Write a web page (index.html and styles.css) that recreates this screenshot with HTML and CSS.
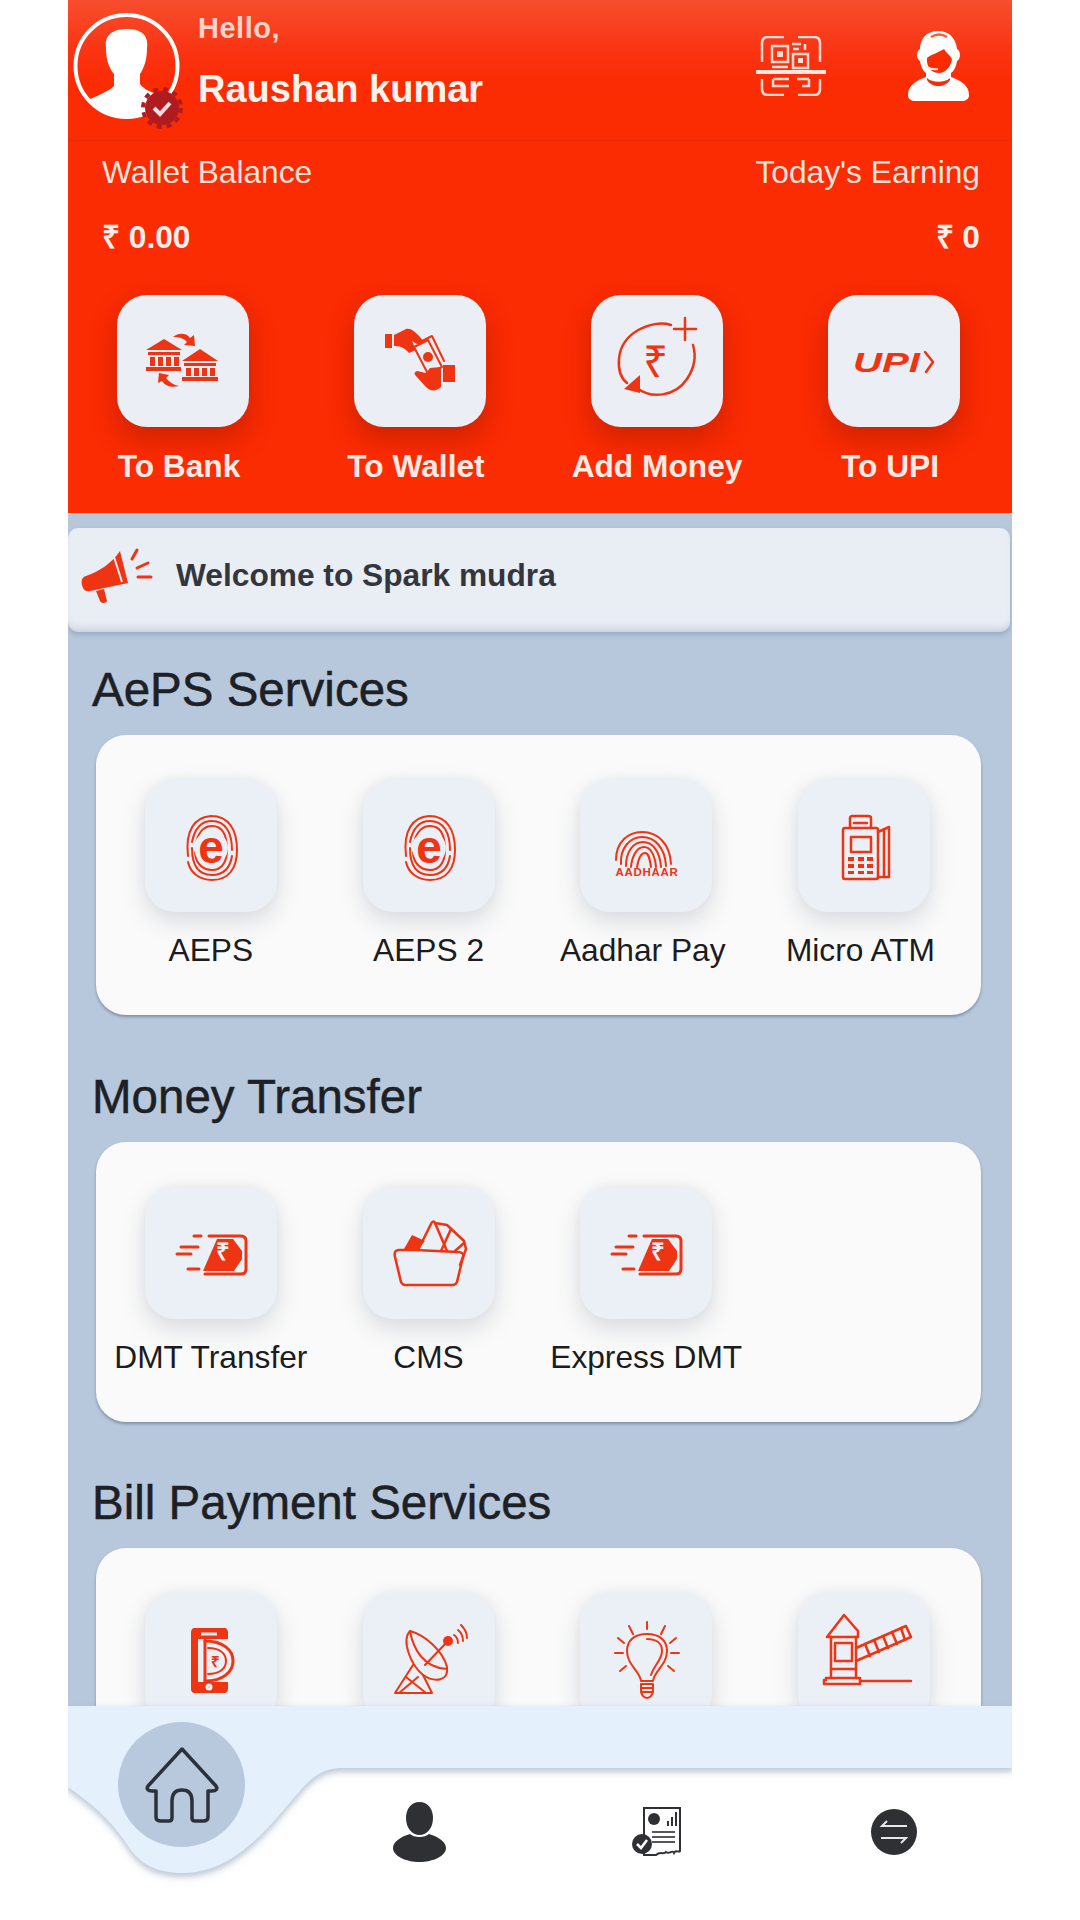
FILE: index.html
```html
<!DOCTYPE html>
<html lang="en">
<head>
<meta charset="utf-8">
<title>Spark mudra</title>
<link rel="stylesheet" href="styles.css">
</head>
<body>
<svg class="defs" width="0" height="0" aria-hidden="true">
  <defs>
    <clipPath id="avatar-clip"><circle cx="58.5" cy="66" r="50"/></clipPath>
    <symbol id="fingerprint" viewBox="0 0 132 132">
      <g class="ln ln-2" >
        <path d="M43 76C40 50 50 37 66 36C84 36 92 50 92 70C92 88 84 100 67 100C54 100 45 92 43 82"/>
        <path d="M47 62C50 47 58 41 67 41C80 41 87 52 87 70"/>
        <path d="M47 68C47 86 54 95 67 95C78 95 85 88 87 76"/>
        <path d="M51 64C53 51 60 46 67 46C77 46 82 55 82 70C82 83 76 90 67 90C57 90 50 82 50 72"/>
      </g>
      <circle class="tile-fill" cx="66" cy="68" r="17"/>
      <text class="fp-e" x="66" y="83" text-anchor="middle">e</text>
    </symbol>
    <symbol id="dmt" viewBox="0 0 132 132">
      <g class="ln ln-3">
        <path d="M49 49H56M36 60H53M43 82H54M32 67H46"/>
        <path d="M64 49H96C100 49 101 51 101 54V82C101 85 100 87 96 87H60"/>
      </g>
      <path class="fill" d="M72 52H88L97 64V72L89 84H58Z"/>
      <text class="dmt-r" x="78" y="73" text-anchor="middle">₹</text>
    </symbol>
  </defs>
</svg>

<div class="app">
  <header class="header">
    <div class="top-row">
      <svg class="avatar" viewBox="0 0 130 132" width="130" height="132">
        <circle class="avatar-ring" cx="58.5" cy="66" r="51"/>
        <path class="avatar-bust" clip-path="url(#avatar-clip)" d="M38 48C36 34 46 29 59 29C72 29 81 34 79 48C79 60 76 68 72 74L72 84C76 90 84 92 92 96V125H16V102C28 96 40 92 46 86V74C41 68 38 60 38 48Z"/>
        <circle class="badge" cx="94" cy="108" r="17"/>
        <circle class="badge-edge" cx="94" cy="108" r="19"/>
        <path class="badge-check" d="M86 108L92 114L102 103"/>
      </svg>
      <div class="greeting">
        <div class="hello">Hello,</div>
        <div class="name">Raushan kumar</div>
      </div>
      <div class="top-icons">
        <svg class="qr" viewBox="0 0 72 60" width="72" height="60">
          <g class="qr-ln">
            <path d="M7 26V7C7 3 9 1 13 1H29M43 1H59C63 1 65 3 65 7V26"/>
            <path d="M7 43V53C7 57 9 59 13 59H29M43 59H59C63 59 65 57 65 53V43"/>
            <path d="M1 36H71" class="qr-bar"/>
            <rect x="17" y="10" width="16" height="16"/>
            <rect x="38" y="18" width="15" height="14"/>
            <path d="M37 8H46M50 8V14M38 13H44M17 31H33M18 43H34M18 43V50H34M42 43H54M47 50H54V43"/>
          </g>
          <rect class="qr-dot" x="22" y="15" width="6" height="6"/>
          <rect class="qr-dot" x="43" y="22" width="5" height="5"/>
        </svg>
        <svg class="agent" viewBox="0 0 61 70" width="61" height="70">
          <path class="agent-body" d="M30 0C18 0 12 8 12 18C8 20 8 28 12 30C13 36 15 40 18 42V46C8 50 0 54 0 64C0 68 3 70 8 70H53C58 70 61 68 61 64C61 54 53 50 43 46V42C46 40 48 36 49 30C53 28 53 20 49 18C48 8 42 0 30 0Z"/>
          <path class="agent-red" d="M19 27C24 23 32 21 36 18C38 22 42 24 44 28C43 36 37 42 31 42C24 42 18 36 19 27Z"/>
          <path class="agent-red" d="M19 47C24 52 37 52 42 47V49C37 57 24 57 19 49Z"/>
          <path class="agent-line" d="M23 6C28 3 34 3 39 6"/>
          <path class="agent-line-w" d="M14 28C15 36 22 39 30 38"/>
        </svg>
      </div>
    </div>
    <div class="balance-row">
      <span>Wallet Balance</span>
      <span>Today's Earning</span>
    </div>
    <div class="amount-row">
      <span>₹ 0.00</span>
      <span>₹ 0</span>
    </div>
    <div class="actions">
      <div class="action">
        <div class="tile tile-light">
          <svg viewBox="0 0 132 132" width="132" height="132">
            <g class="fill">
              <path d="M47 44L65 55H29Z"/><path d="M31 57H63V60H31Z"/><path d="M33 62H38V71H33ZM41 62H46V71H41ZM49 62H54V71H49ZM57 62H62V71H57Z"/><path d="M29 72H64V76H29Z"/>
              <path d="M83 54L101 66H65Z"/><path d="M67 68H99V71H67Z"/><path d="M69 73H74V81H69ZM77 73H82V81H77ZM85 73H90V81H85ZM93 73H98V81H93Z"/><path d="M65 82H101V86H65Z"/>
              <path d="M56 42C62 37 70 38 73 43L77 40L78 51L67 50L70 47C67 43 61 42 56 42Z"/>
              <path d="M62 91C55 93 48 91 45 86L41 88L42 78L52 80L49 83C52 87 57 90 62 91Z"/>
            </g>
          </svg>
        </div>
        <div class="action-label">To Bank</div>
      </div>
      <div class="action">
        <div class="tile tile-light">
          <svg viewBox="0 0 132 132" width="132" height="132">
            <g class="fill">
              <path d="M31 39H38V53H31Z"/>
              <path d="M40 40L52 34C57 33 60 36 66 42L70 47L63 49L58 46L62 55L55 58C50 52 46 51 40 51Z"/>
              <path d="M89 70H101V87H89Z"/>
              <path d="M87 72L76 73L72 78L63 76C60 77 60 79 62 81L72 92C76 96 82 97 87 92V87Z"/>
            </g>
            <g class="ln ln-2">
              <path d="M60 52L74 45L88 72L74 79Z"/>
              <path d="M64 48L78 41L90 66"/>
            </g>
            <circle class="fill" cx="74" cy="62" r="5"/>
          </svg>
        </div>
        <div class="action-label">To Wallet</div>
      </div>
      <div class="action">
        <div class="tile tile-light">
          <svg viewBox="0 0 132 132" width="132" height="132">
            <g class="ln ln-25">
              <path d="M80 30C60 24 30 38 28 64C27 76 31 84 36 88"/>
              <path d="M46 93C60 104 84 102 96 84C104 72 105 60 102 50"/>
              <path d="M94 23V45M83 34H105"/>
            </g>
            <path class="fill" d="M49 80V98L33 94Z"/>
            <text class="rupee-big" x="64" y="82" text-anchor="middle">₹</text>
          </svg>
        </div>
        <div class="action-label action-label-wide">Add Money</div>
      </div>
      <div class="action">
        <div class="tile tile-light">
          <svg viewBox="0 0 132 132" width="132" height="132">
            <text class="upi" x="25" y="77" textLength="67" lengthAdjust="spacingAndGlyphs">UPI</text>
            <path class="ln ln-25" d="M97 57L105 67L98 77"/>
          </svg>
        </div>
        <div class="action-label">To UPI</div>
      </div>
    </div>
  </header>

  <div class="notice">
    <svg class="megaphone" viewBox="0 0 72 54" width="72" height="54">
      <g class="fill">
        <path d="M38 2L46 34L8 42C3 43 1 40 0 36C-1 32 0 28 4 27C18 22 30 14 38 2Z"/>
        <path d="M14 42L22 40L25 52C25 54 19 55 18 52Z"/>
      </g>
      <path class="ln ln-3" d="M50 10L55 1M55 19L66 14M56 28H69"/>
      <path class="notice-gap" d="M32 8L40 33"/>
    </svg>
    <span class="notice-text">Welcome to Spark mudra</span>
  </div>

  <section class="section">
    <h2 class="section-title">AePS Services</h2>
    <div class="card">
      <div class="grid">
        <div class="service">
          <div class="tile tile-soft"><svg viewBox="0 0 132 132" width="132" height="132"><use href="#fingerprint"/></svg></div>
          <div class="service-label">AEPS</div>
        </div>
        <div class="service">
          <div class="tile tile-soft"><svg viewBox="0 0 132 132" width="132" height="132"><use href="#fingerprint"/></svg></div>
          <div class="service-label">AEPS 2</div>
        </div>
        <div class="service">
          <div class="tile tile-soft">
            <svg viewBox="0 0 132 132" width="132" height="132">
              <g class="ln ln-2">
                <path d="M36 80C36 62 48 52 62 52C78 52 90 64 91 84"/>
                <path d="M41 84C40 68 50 57 62 57C75 57 85 68 86 86"/>
                <path d="M46 86C46 72 53 62 63 62C73 62 80 72 81 87"/>
                <path d="M51 87C52 76 57 67 64 67C71 67 75 76 76 87"/>
                <path d="M57 87C58 81 60 73 65 73C69 73 70 80 71 87"/>
              </g>
              <text class="aadhaar" x="67" y="96" text-anchor="middle">AADHAAR</text>
            </svg>
          </div>
          <div class="service-label service-label-left">Aadhar Pay</div>
        </div>
        <div class="service">
          <div class="tile tile-soft">
            <svg viewBox="0 0 132 132" width="132" height="132">
              <g class="ln ln-25">
                <rect x="45" y="48" width="35" height="51" rx="2"/>
                <path d="M52 48V38C52 37 53 36 54 36H70C72 36 73 37 73 38V48"/>
                <rect x="53" y="57" width="20" height="15"/>
                <path d="M56 43H69"/>
                <path d="M80 52L91 47V97H80"/>
                <path d="M86 50V97"/>
              </g>
              <g class="fill">
                <path d="M50 77H56V81H50ZM60 77H66V81H60ZM69 77H75V81H69ZM50 84H56V88H50ZM60 84H66V88H60ZM69 84H75V88H69ZM50 91H56V94H50ZM60 91H66V94H60ZM69 91H75V94H69Z"/>
              </g>
            </svg>
          </div>
          <div class="service-label service-label-left">Micro ATM</div>
        </div>
      </div>
    </div>
  </section>

  <section class="section">
    <h2 class="section-title">Money Transfer</h2>
    <div class="card">
      <div class="grid">
        <div class="service">
          <div class="tile tile-soft"><svg viewBox="0 0 132 132" width="132" height="132"><use href="#dmt"/></svg></div>
          <div class="service-label">DMT Transfer</div>
        </div>
        <div class="service">
          <div class="tile tile-soft">
            <svg viewBox="0 0 132 132" width="132" height="132">
              <path class="fill" d="M41 62L49 48L62 54L53 64Z"/>
              <g class="ln ln-25">
                <path d="M32 70C31 66 32 63 36 63H52L95 65C99 65 101 67 100 70L94 95C93 97 92 98 90 98H42C40 98 39 97 38 95Z"/>
                <path d="M55 63L68 37C69 34 71 34 72 36L84 64"/>
                <path d="M72 36L84 38L101 54L103 62L97 78"/>
                <path d="M88 42L78 64M92 64L101 56"/>
              </g>
            </svg>
          </div>
          <div class="service-label">CMS</div>
        </div>
        <div class="service">
          <div class="tile tile-soft"><svg viewBox="0 0 132 132" width="132" height="132"><use href="#dmt"/></svg></div>
          <div class="service-label">Express DMT</div>
        </div>
      </div>
    </div>
  </section>

  <section class="section">
    <h2 class="section-title">Bill Payment Services</h2>
    <div class="card">
      <div class="grid">
        <div class="service">
          <div class="tile tile-soft">
            <svg viewBox="0 0 132 132" width="132" height="132">
              <path class="fill" d="M50 35H79C82 35 83 37 83 40V46H53V89H83V95C83 98 82 100 79 100H50C47 100 46 98 46 95V40C46 37 47 35 50 35Z"/>
              <g class="tile-stroke">
                <path d="M56 41H72"/>
                <circle cx="64" cy="94" r="2"/>
              </g>
              <path class="ln ln-3" d="M60 47V88"/>
              <path class="ln ln-3" d="M60 48C78 48 88 57 88 68C88 79 78 88 60 88"/>
              <path class="ln ln-2" d="M63 55C74 55 81 60 81 68C81 76 74 81 63 81"/>
              <text class="phone-r" x="70" y="74" text-anchor="middle">₹</text>
            </svg>
          </div>
        </div>
        <div class="service">
          <div class="tile tile-soft">
            <svg viewBox="0 0 132 132" width="132" height="132">
              <g class="ln ln-2">
                <path d="M47 38C38 48 48 72 60 82C72 90 86 88 84 74C80 58 62 42 47 38Z"/>
                <path d="M47 38C50 55 60 75 84 76"/>
                <path d="M62 72L85 48"/>
                <path d="M50 72L32 100H69L60 82"/>
                <path d="M43 84L63 100M36 100L55 84"/>
                <path d="M91 42C94 44 95 47 95 50M95 37C99 40 100 44 100 48M98 32C102 36 104 40 104 45"/>
              </g>
              <circle class="fill" cx="85" cy="48" r="5"/>
            </svg>
          </div>
        </div>
        <div class="service">
          <div class="tile tile-soft">
            <svg viewBox="0 0 132 132" width="132" height="132">
              <g class="ln ln-2">
                <path d="M61 88C60 78 47 72 47 58C47 47 55 41 67 41C79 41 87 47 87 58C87 72 74 78 73 88Z"/>
                <path d="M67 46C77 46 82 51 82 58C82 67 74 72 71 82"/>
                <path d="M61 91H73V97C73 102 70 105 67 105C64 105 61 102 61 97Z"/>
                <path d="M61 95H73M61 99H73"/>
                <path d="M67 29V36M49 33L53 41M85 33L81 41M38 45L44 50M96 45L90 50M35 60H43M91 60H99M40 78L46 73M94 78L88 73"/>
              </g>
            </svg>
          </div>
        </div>
        <div class="service">
          <div class="tile tile-soft">
            <svg viewBox="0 0 132 132" width="132" height="132">
              <g class="ln ln-25">
                <path d="M29 44L46 22L60 38V44H29"/>
                <path d="M33 44V85M58 44V85"/>
                <rect x="37" y="50" width="17" height="18"/>
                <path d="M33 76H58M28 85H62V91H26V87H28"/>
                <path d="M62 88H113"/>
                <path d="M58 55L108 33L113 44L58 68"/>
                <path d="M67 51L72 63M76 47L81 59M85 43L90 55M94 39L99 51M103 35L107 47"/>
              </g>
            </svg>
          </div>
        </div>
      </div>
    </div>
  </section>

  <nav class="nav">
    <svg class="nav-shape" viewBox="0 0 944 214" width="944" height="214" preserveAspectRatio="none">
      <path d="M0 0H944V62H274C255 62 243 72 232 85C205 115 170 167 114 167C88 167 72 158 60 140C42 112 20 95 0 81Z"/>
    </svg>
    <div class="home-btn">
      <svg viewBox="0 0 74 76" width="74" height="76">
        <path class="home-line" d="M37 2L71 39C73 42 71 44 67 44H63V70C63 73 61 74 58 74H50C48 74 47 73 47 71V54C47 46 43 43 37 43C31 43 27 46 27 54V71C27 73 26 74 24 74H16C13 74 11 73 11 70V44H7C3 44 1 42 3 39Z"/>
      </svg>
    </div>
    <div class="nav-items">
      <svg class="nav-user" viewBox="0 0 53 60" width="53" height="60">
        <path class="dark" d="M26.500 0C35 0 40 7 40 16C40 26 34 33 26.500 33C19 33 13 26 13 16C13 7 18 0 26.500 0Z"/>
        <path class="dark" d="M17 32C21 36 32 36 36 32C46 35 53 40 53 46C53 54 40 60 26.500 60C13 60 0 54 0 46C0 40 7 35 17 32Z"/>
      </svg>
      <svg class="nav-report" viewBox="0 0 50 50" width="50" height="50">
        <path class="report-page" d="M12 1H48V44C46 46 44 42 42 46C40 42 38 48 34 45C32 48 28 44 24 48H12Z"/>
        <circle class="dark" cx="22" cy="12" r="6"/>
        <path class="dark" d="M35 14H37V19H35ZM39 10H41V19H39ZM43 5H45V19H43Z"/>
        <path class="report-line" d="M20 25H43M20 30H43M20 35H43"/>
        <circle class="dark" cx="10" cy="37" r="10"/>
        <path class="check-white" d="M5 37L9 41L15 33"/>
      </svg>
      <svg class="nav-swap" viewBox="0 0 46 46" width="46" height="46">
        <circle class="dark" cx="23" cy="23" r="23"/>
        <path class="swap-line" d="M36 17H11L16 12M10 29H35L30 34"/>
      </svg>
    </div>
  </nav>
</div>
</body>
</html>
```
FILE: styles.css
```css
* { box-sizing: border-box; }
html, body { margin: 0; padding: 0; background: #ffffff; }
body { font-family: "Liberation Sans", Arial, sans-serif; }
.defs { position: absolute; }

.app {
  position: relative;
  width: 944px;
  height: 1920px;
  margin: 0 auto;
  overflow: hidden;
  background: #b7c8dc;
}

/* header */
.header {
  height: 513px;
  background: linear-gradient(180deg, #f74e2e 0, #fa3413 50px, #fb2b02 85px, #fb2b02 100%);
  color: #fff;
}
.top-row {
  display: flex;
  height: 141px;
  border-bottom: 1px solid #ea2a04;
}
.avatar { flex: none; }
.avatar-ring { fill: none; stroke: #fff; stroke-width: 4; }
.avatar-bust { fill: #fff; }
.badge { fill: #b01b20; }
.badge-edge { fill: none; stroke: #b01b20; stroke-width: 4; stroke-dasharray: 5 5; }
.badge-check { fill: none; stroke: #f7dcdc; stroke-width: 4; }
.greeting { display: flex; flex-direction: column; }
.hello {
  margin-top: 11px;
  font-size: 29px;
  line-height: 34px;
  font-weight: 700;
  letter-spacing: .5px;
  color: #fbd3c9;
}
.name {
  margin-top: 23px;
  font-size: 38px;
  line-height: 42px;
  font-weight: 700;
  color: #fdf2ee;
}
.top-icons {
  display: flex;
  align-items: center;
  gap: 81px;
  margin-left: auto;
  padding-right: 43px;
  padding-bottom: 8px;
}
.qr-ln { fill: none; stroke: #fbdcd4; stroke-width: 2.500; }
.qr-bar { stroke-width: 4; stroke: #fde6e0; }
.qr-dot { fill: #fbdcd4; }
.agent-body { fill: #fff; }
.agent-red { fill: #fb2b02; }
.agent-line { fill: none; stroke: #fb5a3a; stroke-width: 2.500; }
.agent-line-w { fill: none; stroke: #fdeee9; stroke-width: 2; }

.balance-row, .amount-row {
  display: flex;
  justify-content: space-between;
  padding: 0 32px 0 34px;
}
.balance-row {
  margin-top: 12px;
  font-size: 31.700px;
  line-height: 38px;
  color: #fde3dc;
}
.amount-row {
  margin-top: 28px;
  font-size: 31.700px;
  line-height: 36px;
  font-weight: 700;
  color: #fdeee9;
}

.actions {
  display: flex;
  justify-content: space-between;
  padding: 0 52px 0 49px;
  margin-top: 40px;
}
.action {
  display: flex;
  flex-direction: column;
  align-items: center;
  width: 132px;
}
.tile { width: 132px; height: 132px; }
.tile svg { display: block; }
.tile-light {
  border-radius: 30px;
  background: #ebeef5;
  box-shadow: 0 12px 26px rgba(140, 25, 0, .42);
}
.action-label {
  margin-top: 21px;
  margin-right: 8px;
  font-size: 31.700px;
  line-height: 36px;
  font-weight: 700;
  white-space: nowrap;
  color: #fdeae4;
}
.action-label-wide { margin-right: 0; }

/* notice */
.notice {
  display: flex;
  align-items: center;
  gap: 22px;
  height: 104px;
  margin: 15px 2px 0 0;
  padding: 0 0 9px 14px;
  border-radius: 10px;
  background: #e9edf4;
  box-shadow: inset 0 -8px 8px -6px rgba(120, 135, 160, .35), 0 3px 5px rgba(70, 90, 120, .25);
}
.megaphone { flex: none; overflow: visible; }
.notice-gap { fill: none; stroke: #e9edf4; stroke-width: 2; }
.notice-text {
  font-size: 31.700px;
  font-weight: 700;
  color: #33363c;
}

/* sections */
.section { margin-top: 29px; }
.section + .section { margin-top: 0; }
.section-title {
  margin: 0 0 16px 24px;
  font-size: 47.500px;
  line-height: 58px;
  font-weight: 400;
  -webkit-text-stroke: .5px #1d2024;
  color: #1d2024;
}
.card {
  width: 885px;
  height: 280px;
  margin: 0 0 52.500px 28px;
  padding: 45px 0 0 6px;
  border-radius: 30px;
  background: #fafafa;
  box-shadow: 0 2px 3px rgba(70, 90, 120, .5);
}
.grid {
  display: grid;
  grid-template-columns: repeat(4, 217.700px);
}
.service {
  display: flex;
  flex-direction: column;
  align-items: center;
}
.tile-soft {
  border-radius: 30px;
  background: #ebeff6;
  box-shadow: 0 10px 24px rgba(90, 100, 120, .2), 0 -2px 10px rgba(120, 130, 150, .07);
}
.service-label {
  margin-top: 19px;
  font-size: 31.700px;
  line-height: 38px;
  white-space: nowrap;
  color: #1a1c20;
}
.service-label-left { margin-right: 7px; }

/* shared icon paint */
.fill { fill: #ee3412; }
.ln { fill: none; stroke: #ee3412; stroke-linecap: round; stroke-linejoin: round; }
.ln-2 { stroke-width: 2; }
.ln-25 { stroke-width: 2.500; }
.ln-3 { stroke-width: 3; }
.tile-fill { fill: #ebeff6; }
.tile-stroke { fill: none; stroke: #ebeff6; stroke-width: 3; }
.fp-e { font-family: "Liberation Sans", Arial, sans-serif; font-size: 46px; font-weight: 700; fill: #ee3412; }
.dmt-r { font-family: "Liberation Sans", Arial, sans-serif; font-size: 24px; font-weight: 700; fill: #ebeff6; }
.rupee-big { font-family: "Liberation Sans", Arial, sans-serif; font-size: 44px; fill: #ee3412; }
.upi { font-family: "Liberation Sans", Arial, sans-serif; font-size: 28px; font-weight: 700; font-style: italic; fill: #ee3412; }
.aadhaar { font-family: "Liberation Sans", Arial, sans-serif; font-size: 11.500px; font-weight: 700; letter-spacing: .7px; fill: #ee3412; }
.phone-r { font-family: "Liberation Sans", Arial, sans-serif; font-size: 15px; font-weight: 700; fill: #ee3412; }

/* bottom navigation */
.nav {
  position: absolute;
  left: 0;
  right: 0;
  bottom: 0;
  height: 214px;
  background: #fff;
}
.nav-shape {
  position: absolute;
  left: 0;
  top: 0;
  display: block;
  overflow: visible;
  fill: #e4f0fb;
  filter: drop-shadow(0 3px 2px #c3cfdc) drop-shadow(0 2px 3px rgba(120, 135, 155, .25));
}
.home-btn {
  position: absolute;
  left: 50px;
  top: 16px;
  display: flex;
  align-items: center;
  justify-content: center;
  width: 127px;
  height: 125px;
  border-radius: 50%;
  background: #b9c9dd;
}
.home-line { fill: none; stroke: #2a3138; stroke-width: 3.500; stroke-linejoin: round; }
.nav-items { position: absolute; inset: 0; display: flex; }
.nav-user { margin: 96px 0 0 325px; }
.nav-report { margin: 101px 0 0 186px; }
.nav-swap { margin: 103px 0 0 189px; }
.dark { fill: #2f3033; }
.report-page { fill: #fff; stroke: #2f3033; stroke-width: 2; }
.report-line { fill: none; stroke: #55575b; stroke-width: 2; }
.check-white { fill: none; stroke: #fff; stroke-width: 2.500; }
.swap-line { fill: none; stroke: #e6e6e6; stroke-width: 2; }
```
